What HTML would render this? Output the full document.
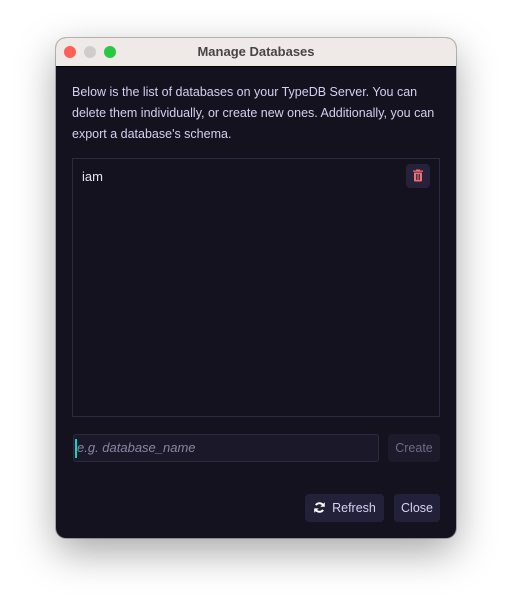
<!DOCTYPE html><html><head><style>
body{margin:0;width:512px;height:612px;background:#fff;font-family:"Liberation Sans",sans-serif;position:relative;overflow:hidden}
.win{position:absolute;left:56px;top:38px;width:400px;height:500px;border-radius:10px;background:#14121f;box-shadow:0 14px 40px rgba(0,0,0,.35),0 0 0 1px rgba(0,0,0,.25);overflow:hidden}
.tb{height:28px;background:#efe9e7;border-bottom:1px solid #000;text-align:center;line-height:28px;font-weight:bold;font-size:13px;color:#4a4545}
.d{position:absolute;top:8px;width:12px;height:12px;border-radius:50%}
.p{position:absolute;left:16px;top:44px;width:380px;font-size:12.5px;line-height:21px;color:#d6cff0;white-space:nowrap}
.list{position:absolute;left:16px;top:120px;width:366px;height:257px;border:1px solid #2d2940}
.list span{position:absolute;left:9px;top:10px;font-size:13px;color:#e8e4f6}
.trash{position:absolute;right:9px;top:5px;width:24px;height:24px;background:#25223a;border-radius:4px}
.inp{position:absolute;left:17px;top:396px;width:301px;height:26px;border:1px solid #2d2940;border-radius:3px;background:#1b1929;font-style:italic;font-size:13px;color:#8a84a6;line-height:26px;padding-left:3px}
.inp:before{content:"";position:absolute;left:1px;top:4px;width:2px;height:19px;background:#12d4c4}
.btn{position:absolute;height:28px;border-radius:4px;background:#23203a;color:#d8d2f0;font-size:12.5px;line-height:28px;text-align:center}
</style></head><body>
<div class="win">
<div class="tb">Manage Databases</div>
<div class="d" style="left:8px;background:#fe5f57"></div>
<div class="d" style="left:28px;background:#d0cccc"></div>
<div class="d" style="left:48px;background:#28c840"></div>
<div class="p">Below is the list of databases on your TypeDB Server. You can<br>delete them individually, or create new ones. Additionally, you can<br>export a database's schema.</div>
<div class="list"><span>iam</span><div class="trash"><svg width="24" height="24" viewBox="0 0 24 24"><path d="M8 8.5h8v8a1 1 0 0 1-1 1H9a1 1 0 0 1-1-1z M7 6.5h10v1.3H7z M10 5.5h4v1h-4z" fill="#f07078"/><path d="M10.5 10v6M12 10v6M13.5 10v6" stroke="#25223a" stroke-width=".8"/></svg></div></div>
<div class="inp">e.g. database_name</div>
<div class="btn" style="left:332px;top:396px;width:52px;background:#1c1a2b;color:#6f6a88">Create</div>
<div class="btn" style="left:249px;top:456px;width:79px"><svg width="13" height="13" viewBox="0 0 16 16" style="vertical-align:-2px;margin-right:6px"><path d="M13 6A5.5 5.5 0 0 0 3.5 5M3 10a5.5 5.5 0 0 0 9.5 1" stroke="#fff" stroke-width="2.4" fill="none"/><path d="M14.5 1.5v5.5H9zM1.5 14.5V9H7z" fill="#fff"/></svg>Refresh</div>
<div class="btn" style="left:338px;top:456px;width:46px">Close</div>
</div>
</body></html>
